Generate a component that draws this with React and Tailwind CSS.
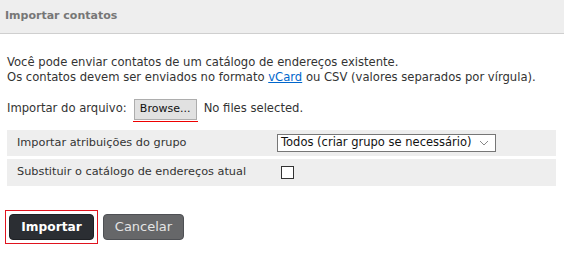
export default function App() {
  const font = { fontFamily: '"DejaVu Sans", Verdana, sans-serif' };
  return (
    <div className="w-[564px] h-[253px] bg-white text-[#333] text-[11.6px]" style={font}>
      <div className="h-[34px] bg-[#eeeeee] border-b border-[#cfcfcf] flex items-center px-[5px]">
        <span className="text-[11px] font-bold text-[#777]">Importar contatos</span>
      </div>
      <div className="px-[7px] pt-[21px] leading-[15px]">
        <p>Você pode enviar contatos de um catálogo de endereços existente.</p>
        <p>
          Os contatos devem ser enviados no formato{' '}
          <span className="text-[#0066cc] underline">vCard</span> ou CSV (valores separados por vírgula).
        </p>
      </div>
      <div className="flex items-center px-[7px] mt-[13px] h-[22px]">
        <span>Importar do arquivo:</span>
        <span className="ml-[7px] relative h-[21px] w-[63px] justify-center bg-[#e1e1e1] border border-[#adadad] flex items-center text-[#111] text-[11px]">
          Browse...
          <span className="absolute left-[-2px] right-[-2px] bottom-[-3px] h-[1px] bg-[#e00]"></span>
        </span>
        <span className="ml-[7px]">No files selected.</span>
      </div>
      <div className="mx-[7px] mt-[10px] flex flex-col gap-[3px] w-[549px] text-[11.3px]">
        <div className="h-[26px] bg-[#eeeeee] flex items-center">
          <span className="w-[270px] pl-[10px]">Importar atribuições do grupo</span>
          <div className="h-[18px] w-[219px] bg-white border border-[#767676] flex items-center pl-[3px] text-[#111] text-[11.5px]">
            <span className="flex-1">Todos (criar grupo se necessário)</span>
            <svg width="10" height="6" viewBox="0 0 10 6" className="mr-[6px]">
              <path d="M1 1 L5 5 L9 1" fill="none" stroke="#888" strokeWidth="1" />
            </svg>
          </div>
        </div>
        <div className="h-[27px] bg-[#eeeeee] flex items-center">
          <span className="w-[274px] pl-[10px]">Substituir o catálogo de endereços atual</span>
          <span className="w-[13px] h-[13px] bg-white border border-[#333] -mt-[1px]"></span>
        </div>
      </div>
      <div className="flex items-center px-[5px] mt-[24px] gap-[5px]">
        <div className="border border-[#e0131e] p-[3px]">
          <button className="h-[26px] w-[85px] rounded-[4px] bg-[#2b2e33] border border-[#1e2024] text-white font-bold text-[12.2px]">Importar</button>
        </div>
        <button className="h-[26px] w-[81px] rounded-[4px] bg-[#666769] border border-[#4e5054] text-[#e4e4e4] text-[13px]">Cancelar</button>
      </div>
    </div>
  );
}
